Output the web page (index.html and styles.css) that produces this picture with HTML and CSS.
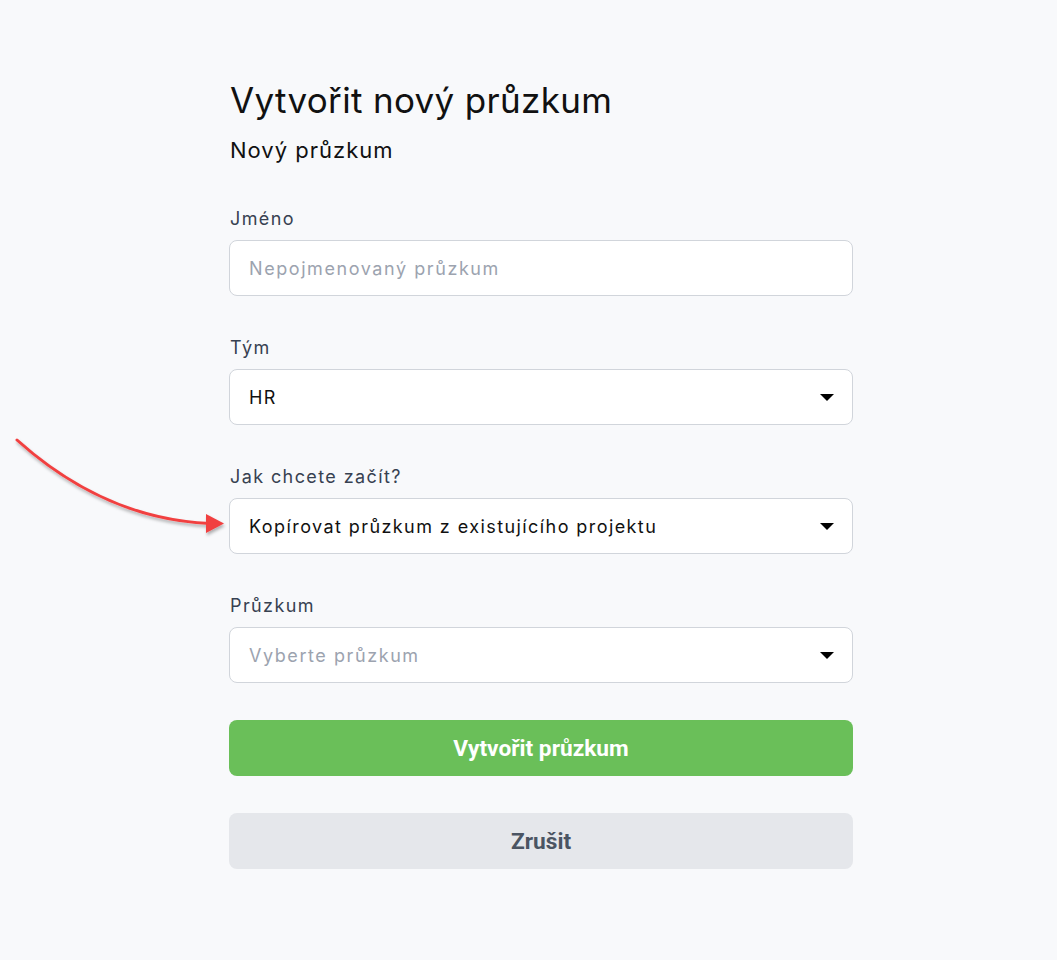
FILE: index.html
```html
<!DOCTYPE html>
<html lang="cs">
<head>
<meta charset="utf-8">
<title>Vytvořit nový průzkum</title>
<link rel="stylesheet" href="styles.css">
</head>
<body>
<main class="page">
  <h1 class="title">Vytvořit nový průzkum</h1>
  <h2 class="subtitle">Nový průzkum</h2>
  <form class="form">
    <div class="field">
      <label class="label">Jméno</label>
      <div class="control"><span class="placeholder">Nepojmenovaný průzkum</span></div>
    </div>
    <div class="field">
      <label class="label">Tým</label>
      <div class="control select"><span class="value">HR</span><span class="caret"></span></div>
    </div>
    <div class="field">
      <label class="label">Jak chcete začít?</label>
      <div class="control select"><span class="value">Kopírovat průzkum z existujícího projektu</span><span class="caret"></span></div>
    </div>
    <div class="field">
      <label class="label">Průzkum</label>
      <div class="control select"><span class="placeholder">Vyberte průzkum</span><span class="caret"></span></div>
    </div>
    <div class="actions">
      <button type="button" class="btn btn-primary">Vytvořit průzkum</button>
      <button type="button" class="btn btn-secondary">Zrušit</button>
    </div>
  </form>
</main>
<svg class="arrow" width="240" height="110" viewBox="0 420 240 110">
  <defs>
    <filter id="sh" x="-10%" y="-10%" width="130%" height="140%">
      <feDropShadow dx="1" dy="2.5" stdDeviation="1.5" flood-color="#000" flood-opacity="0.3"/>
    </filter>
  </defs>
  <g filter="url(#sh)">
    <path d="M17 440 Q 105 519 210 523.5" fill="none" stroke="#f14141" stroke-width="3" stroke-linecap="round"/>
    <polygon points="206,514 224,523.5 206,533" fill="#f14141"/>
  </g>
</svg>
</body>
</html>
```

FILE: styles.css
```css
html, body {
  margin: 0;
  padding: 0;
  background: #f8f9fb;
}
body {
  font-family: Inter, "Noto Sans", sans-serif;
  color: #111827;
  min-height: 960px;
  position: relative;
}
.page {
  width: 624px;
  margin: 0 0 0 229px;
  padding-top: 78px;
}
.title {
  margin: 0;
  font-size: 35px;
  font-weight: 400;
  line-height: 44px;
  letter-spacing: 0.33px;
  color: #111111;
  padding-left: 1px;
}
.subtitle {
  margin: 13px 0 0 0;
  font-size: 22px;
  font-weight: 400;
  line-height: 30px;
  letter-spacing: 1px;
  color: #111111;
  padding-left: 1px;
}
.form {
  margin-top: 42px;
  display: flex;
  flex-direction: column;
  gap: 40px;
}
.field {
  display: flex;
  flex-direction: column;
  gap: 9px;
}
.label {
  font-size: 18px;
  line-height: 24px;
  letter-spacing: 1.4px;
  color: #374151;
  padding-left: 1px;
}
.control {
  box-sizing: border-box;
  height: 56px;
  border: 1px solid #d1d5db;
  border-radius: 8px;
  background: #ffffff;
  display: flex;
  align-items: center;
  justify-content: space-between;
  padding: 0 18px 0 19px;
  font-size: 18px;
  letter-spacing: 1.42px;
}
.placeholder { color: #9ca3af; letter-spacing: 1.57px; }
.value { color: #111111; }
.caret {
  width: 0;
  height: 0;
  border-left: 7px solid transparent;
  border-right: 7px solid transparent;
  border-top: 7px solid #000;
}
.actions {
  display: flex;
  flex-direction: column;
  gap: 37px;
  margin-top: -3px;
}
.btn {
  height: 56px;
  border: none;
  border-radius: 8px;
  font-family: Roboto, "Liberation Sans", sans-serif;
  font-weight: 700;
  font-size: 22.7px;
  cursor: pointer;
}
.btn-primary {
  background: #6abf59;
  color: #ffffff;
}
.btn-secondary {
  background: #e5e7eb;
  color: #4b5563;
}
.arrow {
  position: absolute;
  left: 0;
  top: 420px;
  overflow: visible;
}
```
